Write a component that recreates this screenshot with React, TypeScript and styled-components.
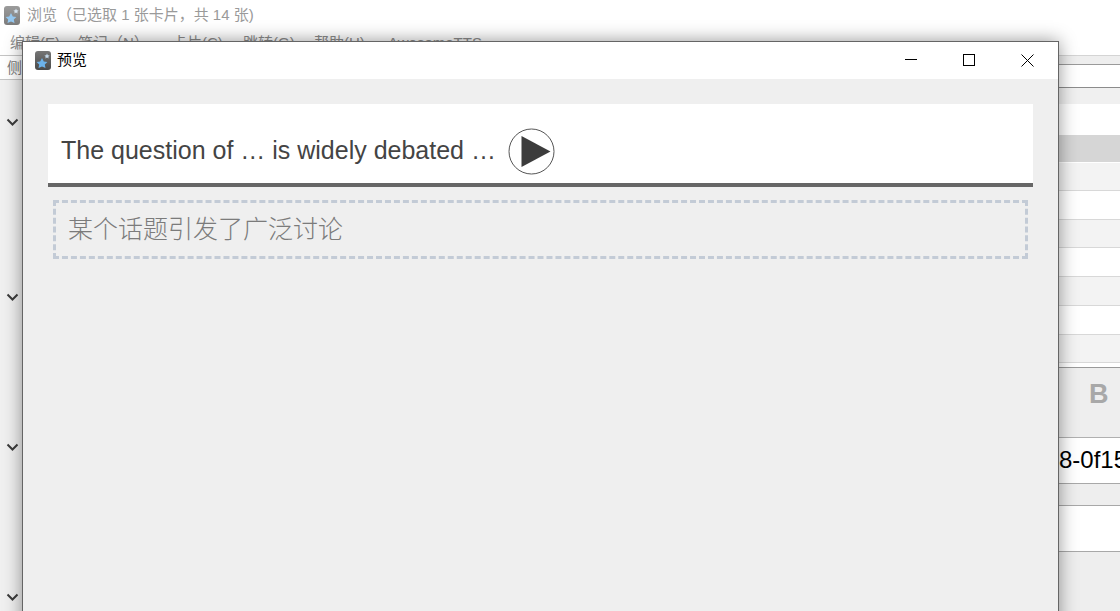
import styled, { createGlobalStyle } from "styled-components";

const GlobalStyle = createGlobalStyle`
  html, body {
    margin: 0;
    padding: 0;
    height: 100%;
    overflow: hidden;
    background: #ffffff;
  }
  #root {
    height: 100%;
  }
`;

const uiFont = `"Liberation Sans", "Noto Sans CJK SC", sans-serif`;

const Page = styled.div`
  position: relative;
  width: 1120px;
  height: 611px;
  overflow: hidden;
  display: flex;
  flex-direction: column;
  font-family: ${uiFont};
`;

const MainTitleBar = styled.div`
  height: 30px;
  display: flex;
  align-items: center;
  gap: 7px;
  padding-left: 4px;
  font-size: 15px;
  color: #9a9a9a;
  background: #ffffff;
`;

const TitleText = styled.span`
  line-height: 18px;
  margin-top: -1px;
`;

const MenuBar = styled.div`
  height: 25px;
  display: flex;
  align-items: flex-start;
  padding-left: 10px;
  font-size: 15px;
  line-height: 26px;
  color: #8c8c8c;
  background: #ffffff;
`;

const MenuItem = styled.span<{ $width: number }>`
  width: ${(p) => p.$width}px;
  white-space: nowrap;
`;

const Body = styled.div`
  flex: 1;
  display: grid;
  grid-template-columns: 1059px 1fr;
  min-height: 0;
`;

const SidePanel = styled.div`
  display: flex;
  flex-direction: column;
  background: #f0f0f0;
  border-top: 1px solid #c4c4c4;
`;

const SideHead = styled.div`
  height: 23px;
  padding-left: 7px;
  font-size: 15px;
  line-height: 23px;
  color: #777;
  background: #ffffff;
  border-bottom: 1px solid #c4c4c4;
`;

const Section = styled.div<{ $height: number }>`
  height: ${(p) => p.$height}px;
  flex: none;
  padding: 38px 0 0 6px;
  box-sizing: border-box;
`;

const Chevron = styled.svg`
  display: block;
  width: 13px;
  height: 9px;
`;

const RightPanel = styled.div`
  display: flex;
  flex-direction: column;
  background: #eeeeee;
  border-top: 1px solid #d4d4d4;
`;

const Row = styled.div<{ $h: number; $bg: string; $line?: string }>`
  height: ${(p) => p.$h}px;
  flex: none;
  box-sizing: border-box;
  background: ${(p) => p.$bg};
  border-bottom: 1px solid ${(p) => p.$line ?? "transparent"};
`;

const ToolRow = styled(Row)`
  padding: 10px 0 0 30px;
  font-size: 27px;
  line-height: 32px;
  font-weight: 700;
  color: #a8a8a8;
`;

const IdRow = styled(Row)`
  overflow: hidden;
  font-size: 24px;
  line-height: 43px;
  color: #000000;
  white-space: nowrap;
`;

const Dialog = styled.div`
  position: absolute;
  left: 22px;
  top: 41px;
  width: 1037px;
  height: 600px;
  box-sizing: border-box;
  display: flex;
  flex-direction: column;
  background: #efefef;
  border: 1px solid #656565;
  box-shadow: 0 0 17px rgba(0, 0, 0, 0.42);
`;

const DialogTitleBar = styled.div`
  height: 37px;
  flex: none;
  display: flex;
  align-items: center;
  padding: 0 1px 0 12px;
  background: #ffffff;
  font-size: 15px;
  color: #000000;
`;

const DialogTitle = styled.span`
  flex: 1;
  margin-left: 6px;
  line-height: 18px;
  margin-top: -1px;
`;

const WindowButton = styled.div<{ $width: number }>`
  width: ${(p) => p.$width}px;
  height: 37px;
  margin-top: -1px;
  display: flex;
  align-items: center;
  justify-content: center;
`;

const Content = styled.div`
  padding: 25px 25px 0;
  display: flex;
  flex-direction: column;
`;

const QuestionCard = styled.div`
  height: 83px;
  box-sizing: border-box;
  display: flex;
  align-items: flex-end;
  gap: 12px;
  padding: 0 0 8px 13px;
  background: #ffffff;
  border-bottom: 4px solid #666666;
`;

const QuestionText = styled.span`
  font-size: 25px;
  line-height: 46px;
  margin-bottom: 2px;
  color: #444444;
  white-space: nowrap;
`;

const PlayIcon = styled.svg`
  width: 47px;
  height: 47px;
  flex: none;
`;

const AnswerBox = styled.div`
  margin: 13px 5px 0;
  height: 59px;
  box-sizing: border-box;
  padding-left: 12px;
  border: 3px dashed #c3cbd6;
  font-size: 25px;
  line-height: 53px;
  color: #7b7b7b;
  font-weight: 300;
`;

const AppIconSvg = styled.svg<{ $dim?: boolean }>`
  flex: none;
  width: 16px;
  height: 19px;
  opacity: ${(p) => (p.$dim ? 0.72 : 1)};
`;

function AppIcon({ dim }: { dim?: boolean }) {
  const id = dim ? "tileDim" : "tile";
  return (
    <AppIconSvg $dim={dim} viewBox="0 0 16 19">
      <defs>
        <linearGradient id={id} x1="0" y1="0" x2="0" y2="1">
          <stop offset="0" stopColor="#767676" />
          <stop offset="1" stopColor="#4a4a4a" />
        </linearGradient>
      </defs>
      <rect width="16" height="19" rx="3" fill={`url(#${id})`} />
      <polygon
        points="7,7 8.8,10.5 12.4,11 9.8,13.5 10.5,17 7,15.4 3.5,17 4.2,13.5 1.6,11 5.2,10.5"
        fill="#6cb2ea"
      />
      <polygon points="12,2.5 12.8,4.2 14.6,4.5 13.3,5.7 13.6,7.5 12,6.6 10.4,7.5 10.7,5.7 9.4,4.5 11.2,4.2" fill="#c5d9ea" />
    </AppIconSvg>
  );
}

function ChevronDown() {
  return (
    <Chevron viewBox="0 0 13 9">
      <polyline points="1.5,1.5 6.5,6.5 11.5,1.5" fill="none" stroke="#3c3c3c" strokeWidth="2" />
    </Chevron>
  );
}

const menus = [
  { label: "编辑(E)", width: 68 },
  { label: "笔记（N）", width: 94 },
  { label: "卡片(C)", width: 71 },
  { label: "跳转(G)", width: 71 },
  { label: "帮助(H)", width: 74 },
  { label: "AwesomeTTS", width: 100 },
];

export default function App() {
  return (
    <Page>
      <GlobalStyle />
      <MainTitleBar>
        <AppIcon dim />
        <TitleText>浏览（已选取 1 张卡片，共 14 张)</TitleText>
      </MainTitleBar>
      <MenuBar>
        {menus.map((m) => (
          <MenuItem key={m.label} $width={m.width}>
            {m.label}
          </MenuItem>
        ))}
      </MenuBar>
      <Body>
        <SidePanel>
          <SideHead>侧边栏</SideHead>
          <Section $height={175}>
            <ChevronDown />
          </Section>
          <Section $height={150}>
            <ChevronDown />
          </Section>
          <Section $height={150}>
            <ChevronDown />
          </Section>
          <Section $height={60}>
            <ChevronDown />
          </Section>
        </SidePanel>
        <RightPanel>
          <Row $h={9} $bg="#eeeeee" $line="#9a9a9a" />
          <Row $h={23} $bg="#ffffff" $line="#8c8c8c" />
          <Row $h={16} $bg="#f0f0f0" />
          <Row $h={31} $bg="#ffffff" />
          <Row $h={28} $bg="#d6d6d6" $line="#ffffff" />
          <Row $h={28} $bg="#f3f3f3" $line="#d8d8d8" />
          <Row $h={29} $bg="#ffffff" $line="#d8d8d8" />
          <Row $h={28} $bg="#f3f3f3" $line="#d8d8d8" />
          <Row $h={29} $bg="#ffffff" $line="#d8d8d8" />
          <Row $h={29} $bg="#f3f3f3" $line="#d8d8d8" />
          <Row $h={29} $bg="#ffffff" $line="#d8d8d8" />
          <Row $h={28} $bg="#f3f3f3" $line="#d8d8d8" />
          <Row $h={5} $bg="#ffffff" $line="#9a9a9a" />
          <ToolRow $h={70} $bg="#eeeeee" $line="#b0b0b0">
            B
          </ToolRow>
          <IdRow $h={46} $bg="#ffffff" $line="#a8a8a8">
            8-0f15
          </IdRow>
          <Row $h={22} $bg="#eeeeee" $line="#a8a8a8" />
          <Row $h={46} $bg="#ffffff" $line="#a8a8a8" />
        </RightPanel>
      </Body>
      <Dialog>
        <DialogTitleBar>
          <AppIcon />
          <DialogTitle>预览</DialogTitle>
          <WindowButton $width={57}>
            <svg width="12" height="12" viewBox="0 0 12 12">
              <line x1="0" y1="5.5" x2="12" y2="5.5" stroke="#000" strokeWidth="1" />
            </svg>
          </WindowButton>
          <WindowButton $width={59}>
            <svg width="12" height="12" viewBox="0 0 12 12">
              <rect x="0.5" y="0.5" width="11" height="11" fill="none" stroke="#000" strokeWidth="1" />
            </svg>
          </WindowButton>
          <WindowButton $width={59}>
            <svg width="13" height="13" viewBox="0 0 13 13">
              <path d="M0.5 0.5 L12.5 12.5 M12.5 0.5 L0.5 12.5" stroke="#000" strokeWidth="1" />
            </svg>
          </WindowButton>
        </DialogTitleBar>
        <Content>
          <QuestionCard>
            <QuestionText>The question of … is widely debated …</QuestionText>
            <PlayIcon viewBox="0 0 47 47">
              <circle cx="23.5" cy="23.5" r="22.5" fill="none" stroke="#555555" strokeWidth="1" />
              <polygon points="13.5,8 42.5,23.5 13.5,39" fill="#3c3c3c" />
            </PlayIcon>
          </QuestionCard>
          <AnswerBox>某个话题引发了广泛讨论</AnswerBox>
        </Content>
      </Dialog>
    </Page>
  );
}
